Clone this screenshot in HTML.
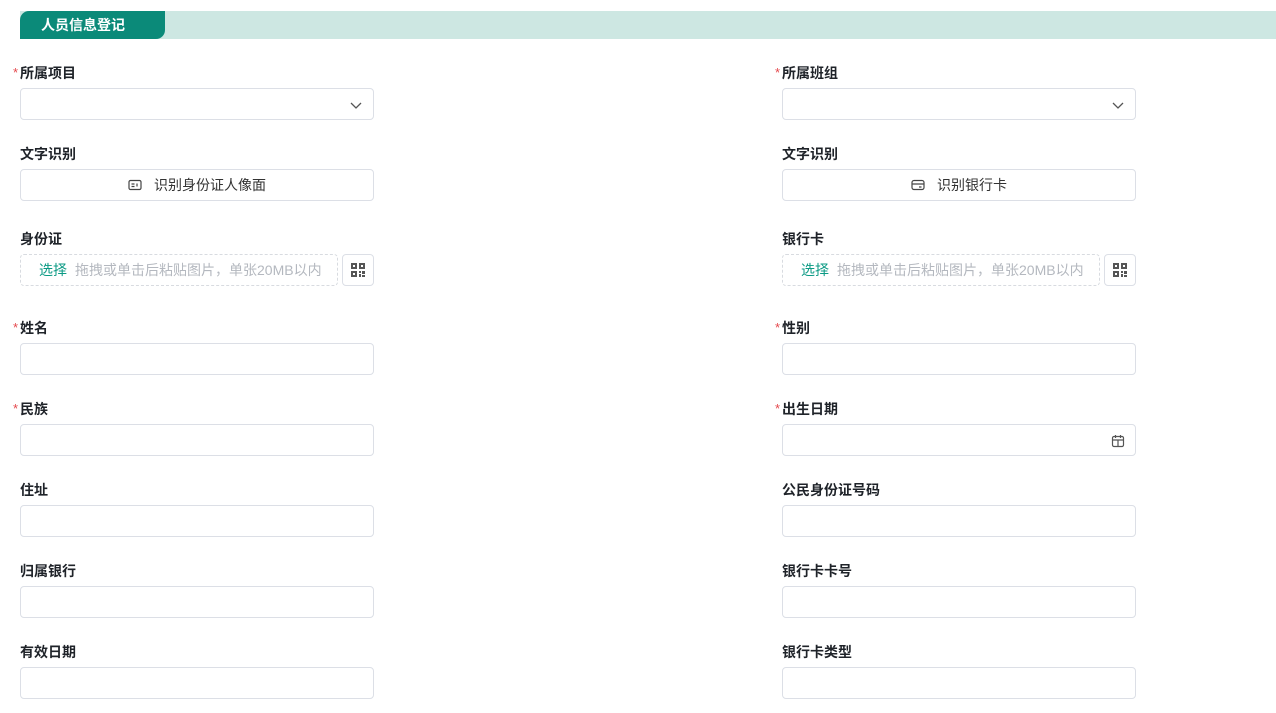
<!DOCTYPE html>
<html><head><meta charset="utf-8"><style>
*{box-sizing:border-box;margin:0;padding:0}
body{width:1276px;height:713px;background:#fff;font-family:"Liberation Sans","Noto Sans CJK SC",sans-serif;position:relative;overflow:hidden;color:#1f2329}
.band{position:absolute;left:20px;top:11px;width:1256px;height:28px;background:#cde7e2}
.tab{position:absolute;left:20px;top:11px;width:145px;height:28px;background:#0b8a79;border-radius:9px 0 9px 0;color:#fff;font-weight:bold;font-size:14px;line-height:28px;padding-left:21px}
.lb{position:absolute;font-size:14px;font-weight:bold;color:#1f2329;line-height:18px}
.lb i{position:absolute;left:-7px;top:0;color:#e5484d;font-style:normal;font-weight:normal;font-size:13px}
.in{position:absolute;width:354px;height:32px;border:1px solid #dcdfe6;border-radius:4px;background:#fff}
.btn{font-size:14px;color:#333;display:flex;align-items:center;justify-content:center;gap:12px}
.up{position:absolute;width:318px;height:32px;border:1px dashed #d8dbe0;border-radius:4px;font-size:14px;color:#b4b8bf;line-height:30px;padding-left:18px}
.up b{color:#0b9a84;font-weight:normal;margin-right:8px}
.qr{position:absolute;width:32px;height:32px;border:1px solid #dcdfe6;border-radius:4px;display:flex;align-items:center;justify-content:center}
.ic{position:absolute;right:10px;top:9px}
</style></head><body>
<div class="band"></div><div class="tab">人员信息登记</div>

<div class="lb" style="left:20px;top:64px"><i>*</i>所属项目</div>
<div class="in" style="left:20px;top:88px"><svg class="ic" width="14" height="14" viewBox="0 0 14 14"><path d="M2 5l5 5 5-5" fill="none" stroke="#555" stroke-width="1.3"/></svg></div>
<div class="lb" style="left:782px;top:64px"><i>*</i>所属班组</div>
<div class="in" style="left:782px;top:88px"><svg class="ic" width="14" height="14" viewBox="0 0 14 14"><path d="M2 5l5 5 5-5" fill="none" stroke="#555" stroke-width="1.3"/></svg></div>

<div class="lb" style="left:20px;top:145px">文字识别</div>
<div class="in btn" style="left:20px;top:169px"><svg width="14" height="12" viewBox="0 0 14 12"><rect x="1" y="1.5" width="12" height="9" rx="1.5" fill="none" stroke="#444" stroke-width="1.2"/><path d="M3.5 5h3M3.5 7.5h3M9 4.5v3" stroke="#444" stroke-width="1.2"/></svg><span>识别身份证人像面</span></div>
<div class="lb" style="left:782px;top:145px">文字识别</div>
<div class="in btn" style="left:782px;top:169px"><svg width="14" height="12" viewBox="0 0 14 12"><rect x="1" y="1.5" width="12" height="9" rx="2" fill="none" stroke="#444" stroke-width="1.2"/><path d="M1 5h12M8 8h2.5" stroke="#444" stroke-width="1.2"/></svg><span>识别银行卡</span></div>

<div class="lb" style="left:20px;top:230px">身份证</div>
<div class="up" style="left:20px;top:254px"><b>选择</b>拖拽或单击后粘贴图片，单张20MB以内</div>
<div class="qr" style="left:342px;top:254px"><svg width="14" height="14" viewBox="0 0 14 14" fill="#555"><path d="M0 0h6v6H0zM2 2v2h2V2zM8 0h6v6H8zM10 2v2h2V2zM0 8h6v6H0zM2 10v2h2v-2zM8 8h2v2H8zM11 8h3v3h-3zM8 11h2v3H8zM11 12h3v2h-3z" fill-rule="evenodd"/></svg></div>
<div class="lb" style="left:782px;top:230px">银行卡</div>
<div class="up" style="left:782px;top:254px"><b>选择</b>拖拽或单击后粘贴图片，单张20MB以内</div>
<div class="qr" style="left:1104px;top:254px"><svg width="14" height="14" viewBox="0 0 14 14" fill="#555"><path d="M0 0h6v6H0zM2 2v2h2V2zM8 0h6v6H8zM10 2v2h2V2zM0 8h6v6H0zM2 10v2h2v-2zM8 8h2v2H8zM11 8h3v3h-3zM8 11h2v3H8zM11 12h3v2h-3z" fill-rule="evenodd"/></svg></div>

<div class="lb" style="left:20px;top:319px"><i>*</i>姓名</div>
<div class="in" style="left:20px;top:343px"></div>
<div class="lb" style="left:782px;top:319px"><i>*</i>性别</div>
<div class="in" style="left:782px;top:343px"></div>

<div class="lb" style="left:20px;top:400px"><i>*</i>民族</div>
<div class="in" style="left:20px;top:424px"></div>
<div class="lb" style="left:782px;top:400px"><i>*</i>出生日期</div>
<div class="in" style="left:782px;top:424px"><svg class="ic" width="14" height="14" viewBox="0 0 14 14"><rect x="1.5" y="2.5" width="11" height="10" rx="1.5" fill="none" stroke="#555" stroke-width="1.2"/><path d="M1.5 6h11M4.5 1v3M9.5 1v3M7 6v6.5" stroke="#555" stroke-width="1.2"/></svg></div>

<div class="lb" style="left:20px;top:481px">住址</div>
<div class="in" style="left:20px;top:505px"></div>
<div class="lb" style="left:782px;top:481px">公民身份证号码</div>
<div class="in" style="left:782px;top:505px"></div>

<div class="lb" style="left:20px;top:562px">归属银行</div>
<div class="in" style="left:20px;top:586px"></div>
<div class="lb" style="left:782px;top:562px">银行卡卡号</div>
<div class="in" style="left:782px;top:586px"></div>

<div class="lb" style="left:20px;top:643px">有效日期</div>
<div class="in" style="left:20px;top:667px"></div>
<div class="lb" style="left:782px;top:643px">银行卡类型</div>
<div class="in" style="left:782px;top:667px"></div>
</body></html>
